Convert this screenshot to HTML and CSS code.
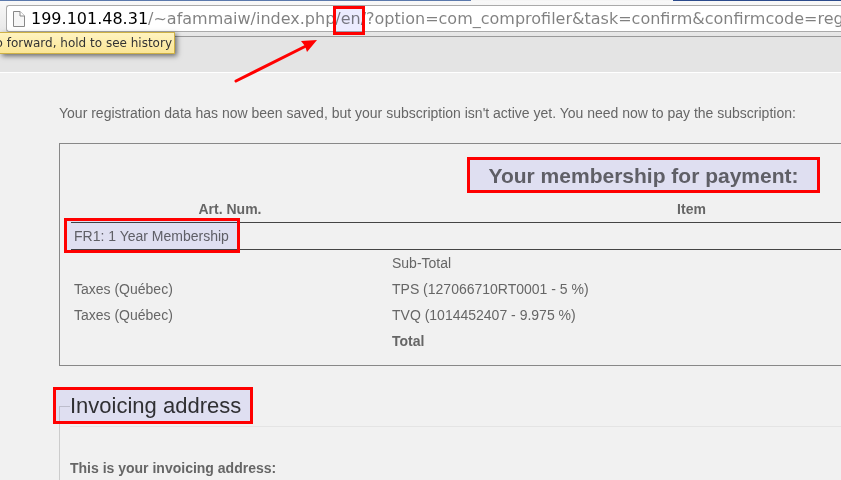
FILE: index.html
```html
<!DOCTYPE html>
<html lang="en">
<head>
<meta charset="utf-8">
<title>Membership payment</title>
<link rel="stylesheet" href="styles.css">
</head>
<body>
<header class="browser">
  <div class="tabs"></div>
  <div class="toolbar">
    <label class="omnibox mark mark-url">
      <svg class="page-icon" width="12" height="16" viewBox="0 0 12 16" aria-hidden="true">
        <path d="M.5.5h6.5l4.500 4.500v10.500h-11z" fill="#f6f6f6" stroke="#888"/>
        <path d="M7 .5v4.500h4.500" fill="#fff" stroke="#888"/>
      </svg>
      <input class="url" type="text" aria-label="Address" value="199.101.48.31/~afammaiw/index.php/en/?option=com_comprofiler&amp;task=confirm&amp;confirmcode=reg">
    </label>
  </div>
  <div class="tooltip" role="tooltip">o forward, hold to see history</div>
  <svg class="arrow" width="84" height="44" viewBox="0 0 84 44" aria-hidden="true">
    <path d="M2 42L72 7" stroke="#f00" stroke-width="3" stroke-linecap="round"/>
    <path d="M83 1L67 2L71 7L73 13Z" fill="#f00"/>
  </svg>
</header>
<div class="banner"></div>
<main class="content">
  <p class="intro">Your registration data has now been saved, but your subscription isn't active yet. You need now to pay the subscription:</p>
  <section class="basket">
    <table class="items">
      <caption><span class="mark mark-title">Your membership for payment:</span></caption>
      <colgroup><col class="col-art"><col><col class="col-price"></colgroup>
      <thead>
        <tr><th scope="col">Art. Num.</th><th scope="col">Item</th><td></td></tr>
      </thead>
      <tbody>
        <tr class="ruled"><td><span class="mark mark-plan">FR1: 1 Year Membership</span></td><td></td><td></td></tr>
        <tr><td></td><td>Sub-Total</td><td></td></tr>
        <tr><td>Taxes (Québec)</td><td>TPS (127066710RT0001 - 5 %)</td><td></td></tr>
        <tr><td>Taxes (Québec)</td><td>TVQ (1014452407 - 9.975 %)</td><td></td></tr>
        <tr><td></td><td><strong>Total</strong></td><td></td></tr>
      </tbody>
    </table>
  </section>
  <fieldset class="invoice">
    <legend><span class="mark mark-legend">Invoicing address</span></legend>
    <p>This is your invoicing address:</p>
  </fieldset>
</main>
</body>
</html>
```
FILE: styles.css
```css
*, ::before, ::after { box-sizing: border-box; }

body {
  margin: 0;
  min-height: 100vh;
  overflow: hidden;
  background: #f1f1f1;
  color: #666;
  font: 14px/26px "Liberation Sans", Arial, sans-serif;
}

/* Browser chrome */
.browser {
  position: relative;
  background: #f5f5f5;
}
.tabs {
  height: 1px;
  background: linear-gradient(90deg, #5b79ac 56%, #f5f5f5 56% 80%, #2c4b8c 80%);
}
.toolbar {
  height: 36px;
  padding: 4px 0 4px 6px;
  border-bottom: 1px solid #999;
  background: linear-gradient(#f8f8f8, #e6e6e6);
}
.omnibox {
  display: flex;
  align-items: center;
  gap: 6px;
  height: 27px;
  padding-left: 6px;
  border: 1px solid #aaa;
  border-right: 0;
  border-radius: 3px 0 0 3px;
  background: #fff;
}
.page-icon { flex: none; }
.url {
  flex: 1;
  min-width: 0;
  height: 25px;
  padding: 0;
  border: 0;
  outline: 0;
  font: 16px/24px "DejaVu Sans", sans-serif;
  color: transparent;
  background: linear-gradient(90deg, #000 117px, #808080 117px);
  -webkit-background-clip: text;
  background-clip: text;
}
.tooltip {
  position: absolute;
  z-index: 2;
  top: 32px;
  left: 0;
  width: 175px;
  display: flex;
  justify-content: flex-end;
  padding: 0 2px;
  border: 1px solid #ceb145;
  border-left: 0;
  background: linear-gradient(#fff3c0, #fbe696);
  box-shadow: 2px 2px 5px #0008;
  color: #333;
  font: 12px/20px "DejaVu Sans", sans-serif;
  white-space: nowrap;
}
.arrow {
  position: absolute;
  z-index: 3;
  top: 39px;
  left: 234px;
  fill: none;
}
.banner {
  height: 36px;
  border-bottom: 1px solid #fff;
  background: #e4e4e4;
}

/* Page */
.content {
  min-width: 1228px;
  padding: 27px 0 0 59px;
}
.intro { margin: 0 0 17px; }
.basket {
  padding: 11px;
  border: 1px solid #888;
}
.items {
  width: 100%;
  table-layout: fixed;
  border-collapse: collapse;
}
.col-art { width: 318px; }
.col-price { width: 222px; }
caption {
  height: 41px;
  font-size: 21px;
  font-weight: bold;
  line-height: 41px;
}
th, td {
  height: 26px;
  padding: 1px 3px 0;
  line-height: 25px;
}
td { text-align: left; }
.ruled td {
  height: 27px;
  border-top: 1px solid #444;
  border-bottom: 1px solid #444;
}
.invoice {
  min-height: 100px;
  margin: 20px 0 0;
  padding: 0 10px;
  border: 1px solid #ccc;
}
.invoice legend {
  width: 100%;
  padding: 0;
  border-bottom: 1px solid #e4e4e4;
  color: #333;
  font-size: 22px;
  line-height: 40px;
}
.invoice p {
  margin: 28px 0 0;
  font-weight: bold;
}

/* Highlight frames drawn over the marked text */
.mark { position: relative; }
.mark::before, .mark::after {
  content: "";
  position: absolute;
  inset: var(--frame);
  pointer-events: none;
}
.mark::before {
  background: #ececff;
  mix-blend-mode: multiply;
}
.mark::after { border: 3px solid #f00; }
.mark-url { --frame: 0 auto -4px 326px; }
.mark-url::before, .mark-url::after { width: 32px; }
.mark-title { --frame: -7px -21px -6px -22px; }
.mark-plan { --frame: -10px -11px -9px -10px; }
.mark-legend { --frame: -6px -12px -6px -17px; }
```
